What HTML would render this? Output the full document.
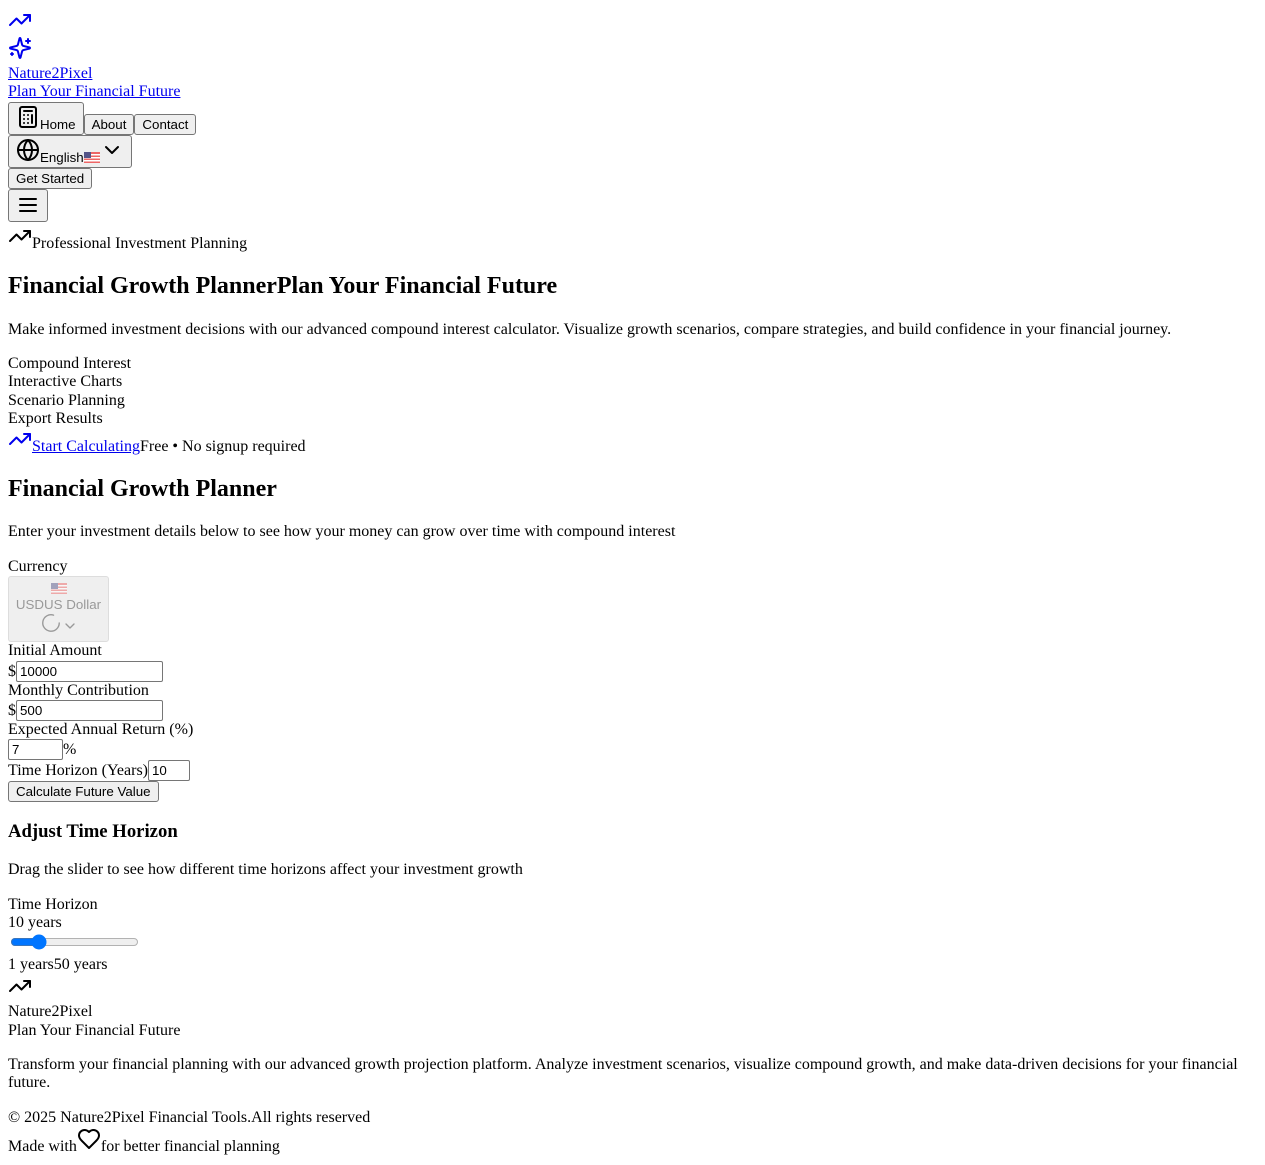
<!DOCTYPE html>
<html><head><meta charset="utf-8"><style>
body{margin:8px;font-family:"Liberation Serif",serif;font-size:16px;line-height:1.15;color:#000;background:#fff}
a{color:#00e}
svg.i{display:block}
button,input{font-family:"Liberation Sans",sans-serif;font-size:13.33px;line-height:normal}
button{background:#efefef;border:1px solid #767676;border-radius:3px;padding:2px 7px;color:#000;margin:0}
.ic{width:24px;height:24px;fill:none;stroke:currentColor;stroke-width:2;stroke-linecap:round;stroke-linejoin:round;vertical-align:baseline}
h1{font-size:1.5em;margin:19.92px 0}
h2{font-size:1.5em;margin:19.92px 0}
h3{font-size:1.17em;margin:18.72px 0}
p{margin:16px 0}
input[type=text]{box-sizing:border-box;width:147px;height:21px;border:1px solid #767676;border-radius:2px;padding:1px 3px}
</style></head><body>
<div style="color:#00e"><svg class="ic i" viewBox="0 0 24 24"><polyline points="22 7 13.5 15.5 8.5 10.5 2 17"/><polyline points="16 7 22 7 22 13"/></svg>
<svg class="ic i" viewBox="0 0 24 24" style="margin-top:4px"><path d="M9.94 15.5A2 2 0 0 0 8.5 14.06l-6.14-1.58a.5.5 0 0 1 0-.96L8.5 9.94A2 2 0 0 0 9.94 8.5l1.58-6.14a.5.5 0 0 1 .96 0L14.06 8.5A2 2 0 0 0 15.5 9.94l6.14 1.58a.5.5 0 0 1 0 .96L15.5 14.06a2 2 0 0 0-1.44 1.44l-1.58 6.14a.5.5 0 0 1-.96 0z"/><path d="M20 3v4M22 5h-4M4 17v2M5 18H3"/></svg></div>
<div style="margin-top:5px"><a href="#">Nature2Pixel</a><br><a href="#">Plan Your Financial Future</a></div>
<div style="line-height:normal"><button><svg class="ic" viewBox="0 0 24 24"><rect x="4" y="2" width="16" height="20" rx="2"/><line x1="8" y1="6" x2="16" y2="6"/><path d="M16 10v8M12 10h.01M8 10h.01M12 14h.01M8 14h.01M12 18h.01M8 18h.01"/></svg>Home</button><button>About</button><button>Contact</button></div>
<div style="line-height:normal"><button><svg class="ic" viewBox="0 0 24 24"><circle cx="12" cy="12" r="10"/><path d="M12 2a14.5 14.5 0 0 0 0 20 14.5 14.5 0 0 0 0-20M2 12h20"/></svg>English<svg width="16" height="11" viewBox="0 0 16 11" style="vertical-align:-1px"><rect width="16" height="11" fill="#e66"/><rect y="2" width="16" height="1.5" fill="#fff"/><rect y="5" width="16" height="1.5" fill="#fff"/><rect y="8" width="16" height="1.5" fill="#fff"/><rect width="7" height="6" fill="#558"/></svg><svg class="ic" viewBox="0 0 24 24"><path d="m6 9 6 6 6-6"/></svg></button></div>
<div style="line-height:normal"><button>Get Started</button></div>
<div style="line-height:normal"><button style="padding:3px 7px;height:33px;width:40px"><svg class="ic" viewBox="0 0 24 24" style="display:block"><path d="M4 6h16M4 12h16M4 18h16"/></svg></button></div>
<div style="margin-top:1px"><svg class="ic" viewBox="0 0 24 24"><polyline points="22 7 13.5 15.5 8.5 10.5 2 17"/><polyline points="16 7 22 7 22 13"/></svg>Professional Investment Planning</div>
<h1>Financial Growth PlannerPlan Your Financial Future</h1>
<p>Make informed investment decisions with our advanced compound interest calculator. Visualize growth scenarios, compare strategies, and build confidence in your financial journey.</p>
<div>Compound Interest</div><div>Interactive Charts</div><div>Scenario Planning</div><div>Export Results</div>
<div style="margin-top:-2px"><a href="#"><svg class="ic" viewBox="0 0 24 24" style="color:#00e"><polyline points="22 7 13.5 15.5 8.5 10.5 2 17"/><polyline points="16 7 22 7 22 13"/></svg>Start Calculating</a>Free • No signup required</div>
<h2>Financial Growth Planner</h2>
<p>Enter your investment details below to see how your money can grow over time with compound interest</p>
<div>Currency</div>
<div style="line-height:normal"><button disabled style="color:#999;border-color:#ddd;width:101px;height:66px;padding:0 6px;background:#efefef"><svg width="16" height="11" viewBox="0 0 16 11" style="opacity:.5"><rect width="16" height="11" fill="#e66"/><rect y="2" width="16" height="1.5" fill="#fff"/><rect y="5" width="16" height="1.5" fill="#fff"/><rect y="8" width="16" height="1.5" fill="#fff"/><rect width="7" height="6" fill="#558"/></svg><br>USDUS Dollar<br><svg class="ic" viewBox="0 0 24 24" style="width:22px;height:22px;stroke-width:1.5"><path d="M21 12a9 9 0 1 1-6.2-8.6"/></svg><svg class="ic" viewBox="0 0 24 24" style="width:16px;height:16px"><path d="m6 9 6 6 6-6"/></svg></button></div>
<div>Initial Amount</div><div>$<input type="text" value="10000"></div>
<div>Monthly Contribution</div><div>$<input type="text" value="500"></div>
<div>Expected Annual Return (%)</div><div><input type="text" value="7" style="width:55px">%</div>
<div>Time Horizon (Years)<input type="text" value="10" style="width:42px"></div>
<div><button>Calculate Future Value</button></div>
<h3>Adjust Time Horizon</h3>
<p>Drag the slider to see how different time horizons affect your investment growth</p>
<div>Time Horizon</div><div>10 years</div>
<div><input type="range" min="1" max="50" value="10" style="margin:2px;width:129px"></div>
<div>1 years50 years</div>
<svg class="ic i" viewBox="0 0 24 24" style="margin-bottom:5px"><polyline points="22 7 13.5 15.5 8.5 10.5 2 17"/><polyline points="16 7 22 7 22 13"/></svg>
<div>Nature2Pixel</div><div>Plan Your Financial Future</div>
<p>Transform your financial planning with our advanced growth projection platform. Analyze investment scenarios, visualize compound growth, and make data-driven decisions for your financial future.</p>
<div>© 2025 Nature2Pixel Financial Tools.All rights reserved</div>
<div>Made with<svg class="ic" viewBox="0 0 24 24"><path d="M19 14c1.49-1.46 3-3.21 3-5.5A5.5 5.5 0 0 0 16.5 3c-1.76 0-3 .5-4.5 2-1.5-1.5-2.74-2-4.5-2A5.5 5.5 0 0 0 2 8.5c0 2.3 1.5 4.05 3 5.5l7 7Z"/></svg>for better financial planning</div>
</body></html>
